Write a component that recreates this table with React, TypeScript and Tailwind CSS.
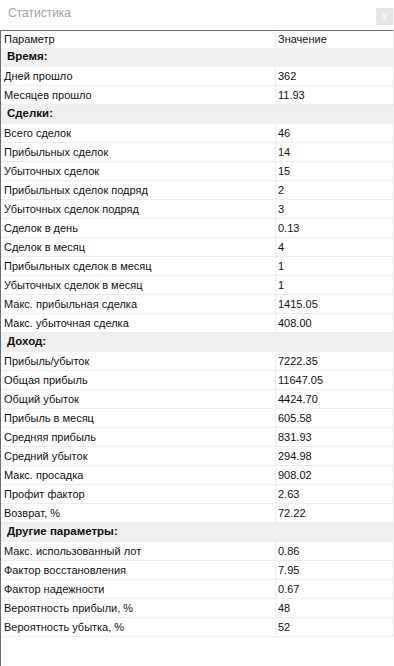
import React from "react";

type Row = { k: string; v?: string; section?: boolean };

const rows: Row[] = [
  { k: "Время:", section: true },
  { k: "Дней прошло", v: "362" },
  { k: "Месяцев прошло", v: "11.93" },
  { k: "Сделки:", section: true },
  { k: "Всего сделок", v: "46" },
  { k: "Прибыльных сделок", v: "14" },
  { k: "Убыточных сделок", v: "15" },
  { k: "Прибыльных сделок подряд", v: "2" },
  { k: "Убыточных сделок подряд", v: "3" },
  { k: "Сделок в день", v: "0.13" },
  { k: "Сделок в месяц", v: "4" },
  { k: "Прибыльных сделок в месяц", v: "1" },
  { k: "Убыточных сделок в месяц", v: "1" },
  { k: "Макс. прибыльная сделка", v: "1415.05" },
  { k: "Макс. убыточная сделка", v: "408.00" },
  { k: "Доход:", section: true },
  { k: "Прибыль/убыток", v: "7222.35" },
  { k: "Общая прибыль", v: "11647.05" },
  { k: "Общий убыток", v: "4424.70" },
  { k: "Прибыль в месяц", v: "605.58" },
  { k: "Средняя прибыль", v: "831.93" },
  { k: "Средний убыток", v: "294.98" },
  { k: "Макс. просадка", v: "908.02" },
  { k: "Профит фактор", v: "2.63" },
  { k: "Возврат, %", v: "72.22" },
  { k: "Другие параметры:", section: true },
  { k: "Макс. использованный лот", v: "0.86" },
  { k: "Фактор восстановления", v: "7.95" },
  { k: "Фактор надежности", v: "0.67" },
  { k: "Вероятность прибыли, %", v: "48" },
  { k: "Вероятность убытка, %", v: "52" },
];

export default function App() {
  return (
    <div
      className="w-[394px] h-[666px] bg-white overflow-hidden flex flex-col text-[11px] text-[#111]"
      style={{ fontFamily: '"Liberation Sans", Arial, sans-serif' }}
    >
      <div className="h-[30px] flex items-start justify-between">
        <div className="pl-[8px] pt-[4px] text-[12px] text-[#a3a3a3]">Статистика</div>
        <div className="mt-[8px] mr-[1px] w-[17px] h-[17px] bg-[#e6e6e6] text-white text-[10px] flex items-center justify-center leading-none">
          x
        </div>
      </div>
      <div className="flex-1 border-l border-[#6e6e6e] flex flex-col">
        <div className="border-t border-[#6e6e6e] h-[18px] flex border-r border-r-[#e8e8e8]">
          <div className="w-[275px] pl-[3px] flex items-center border-r border-[#ececec]">Параметр</div>
          <div className="flex-1 pl-[2px] flex items-center">Значение</div>
        </div>
        {rows.map((r, i) =>
          r.section ? (
            <div
              key={i}
              className="h-[19px] bg-[#f0f0f0] border-b border-[#f0f0f0] flex items-center pl-[6px] font-bold text-[11.5px]"
            >
              {r.k}
            </div>
          ) : (
            <div key={i} className="h-[19px] flex border-b border-[#ececec] border-r border-r-[#e8e8e8]">
              <div className="w-[275px] pl-[3px] flex items-center border-r border-[#ececec]">{r.k}</div>
              <div className="flex-1 pl-[2px] flex items-center">{r.v}</div>
            </div>
          )
        )}
      </div>
    </div>
  );
}
